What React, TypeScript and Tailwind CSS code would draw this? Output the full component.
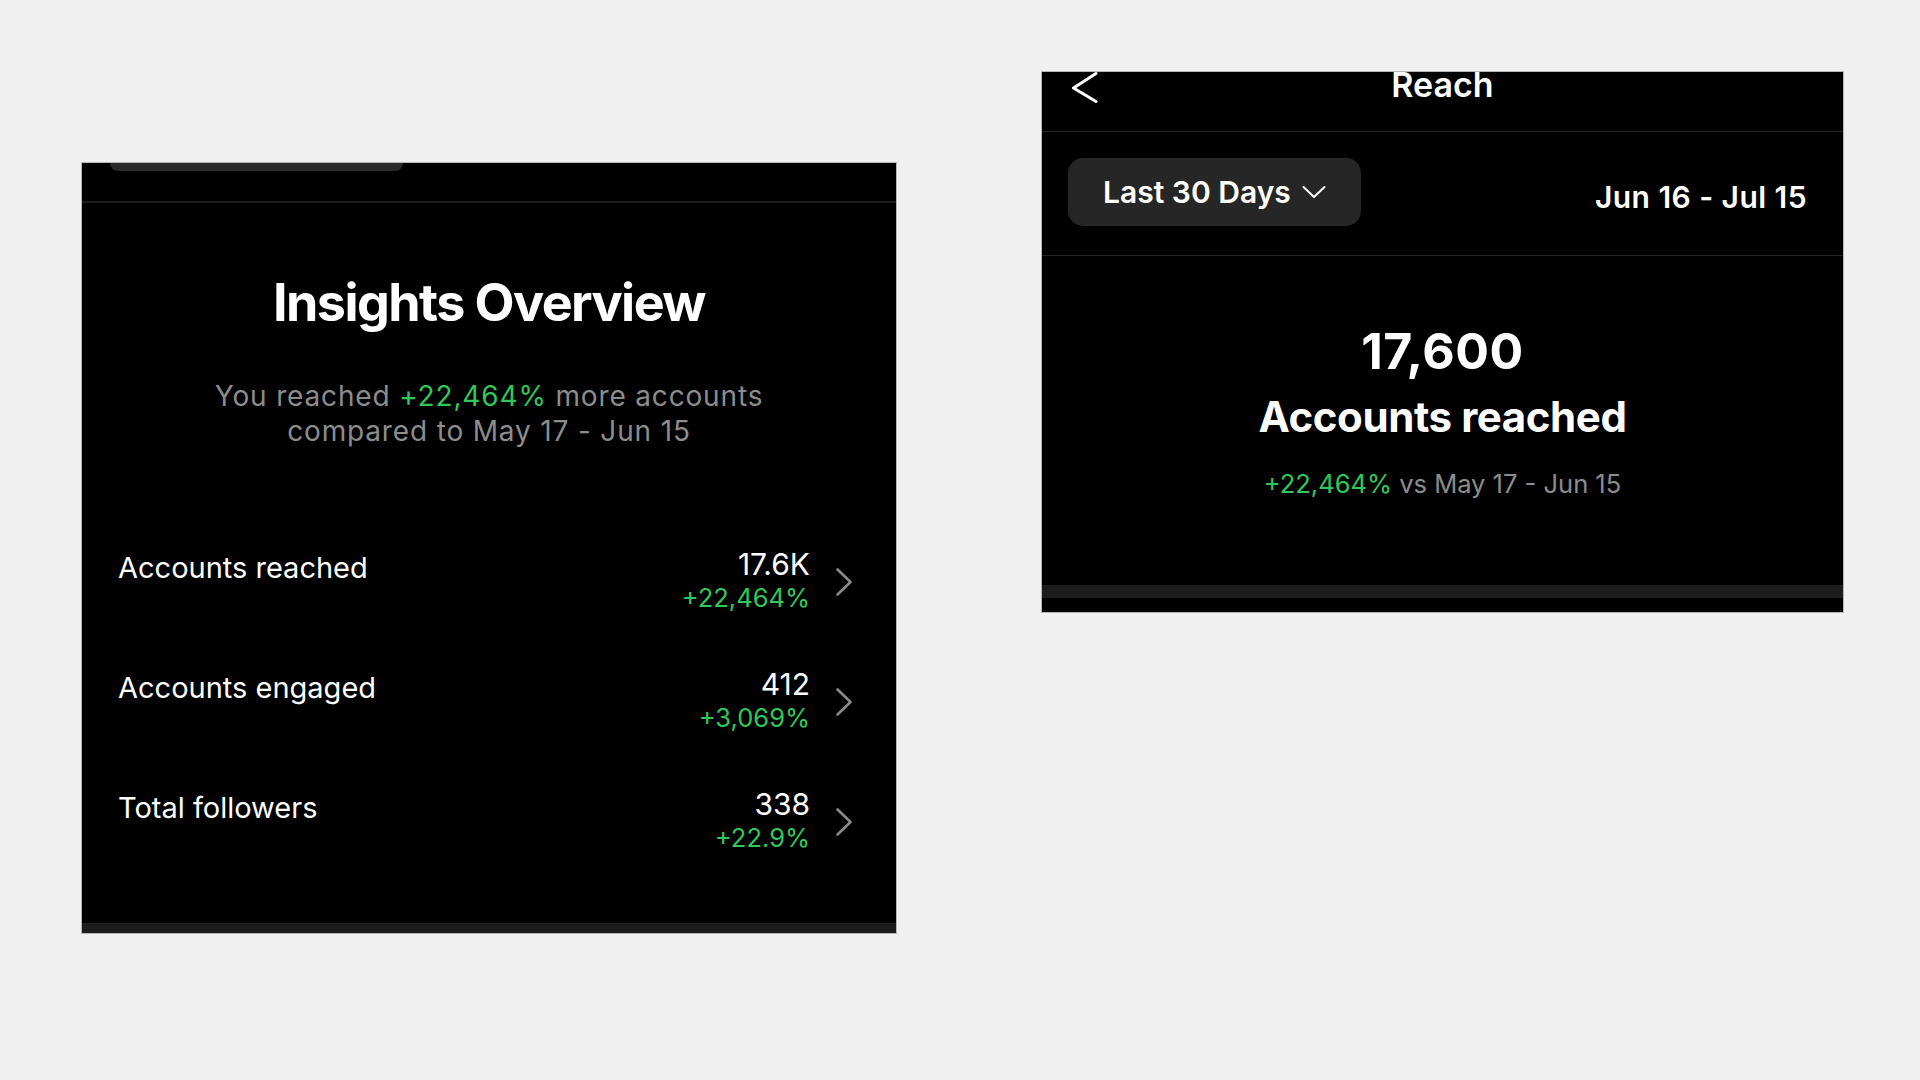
import React from "react";

const GREEN = "text-[#30c85a]";

function RowChevron() {
  return (
    <svg width="18" height="30" viewBox="0 0 18 30" fill="none">
      <path d="M2.5 2.5 L15.5 15 L2.5 27.5" stroke="#8a8a8a" strokeWidth="2.6" strokeLinecap="round" strokeLinejoin="round" />
    </svg>
  );
}

function Row({ label, value, change }: { label: string; value: string; change: string }) {
  return (
    <div className="flex h-[120px] items-start justify-between">
      <span className="mt-[3px] text-[29px] leading-[33px] text-white">{label}</span>
      <div className="flex items-center gap-[25px]">
        <div className="flex flex-col items-end">
          <span className="text-[30px] leading-[33px] text-white">{value}</span>
          <span className={`text-[25.5px] leading-[34px] ${GREEN}`}>{change}</span>
        </div>
        <RowChevron />
      </div>
    </div>
  );
}

function LeftPanel() {
  return (
    <div className="mt-[163px] flex h-[770px] w-[814px] flex-col bg-black ring-1 ring-[#b5b5b5]">
      <div className="h-[38px]">
        <div className="ml-[28px] h-[8px] w-[293px] rounded-b-[10px] bg-[#2a2a2a]" />
      </div>
      <div className="h-[2px] bg-[#1c1c1c]" />
      <h1 className="mt-[69px] text-center text-[52px] font-bold leading-[62px] tracking-[-0.03em] text-white">
        Insights Overview
      </h1>
      <p className="mt-[45px] text-center text-[28px] leading-[35px] tracking-[0.03em] text-[#8c8c8c]">
        You reached <span className={GREEN}>+22,464%</span> more accounts
        <br />
        compared to May 17 - Jun 15
      </p>
      <div className="mt-[99px] flex flex-col pl-[36px] pr-[43px]">
        <Row label="Accounts reached" value="17.6K" change="+22,464%" />
        <Row label="Accounts engaged" value="412" change="+3,069%" />
        <Row label="Total followers" value="338" change="+22.9%" />
      </div>
      <div className="mt-auto h-[10px] bg-[#1c1c1c]" />
    </div>
  );
}

function RightPanel() {
  return (
    <div className="mt-[72px] flex h-[540px] w-[801px] flex-col bg-black ring-1 ring-[#b5b5b5]">
      <div className="grid h-[59px] grid-cols-[1fr_auto_1fr] items-start">
        <div className="pl-[29px]">
          <svg width="27" height="32" viewBox="0 0 27 32" fill="none">
            <path d="M25 1.5 L2.5 16 L25 29.5" stroke="#ffffff" strokeWidth="3" strokeLinecap="round" strokeLinejoin="round" />
          </svg>
        </div>
        <span className="text-[34px] font-semibold leading-[26px] text-white">Reach</span>
        <div />
      </div>
      <div className="h-[1px] bg-[#222222]" />
      <div className="flex items-center justify-between pb-[29px] pl-[26px] pr-[36px] pt-[26px]">
        <div className="flex h-[68px] w-[293px] items-center rounded-[15px] bg-[#262626] pl-[35px]">
          <span className="text-[30px] font-semibold leading-[34px] text-white">Last 30 Days</span>
          <svg className="ml-[11px]" width="24" height="14" viewBox="0 0 24 14" fill="none">
            <path d="M1.5 2 L12 12 L22.5 2" stroke="#ffffff" strokeWidth="2" strokeLinecap="round" strokeLinejoin="round" />
          </svg>
        </div>
        <span className="pt-[9px] text-[30px] font-semibold leading-[34px] tracking-[0.015em] text-white">Jun 16 - Jul 15</span>
      </div>
      <div className="h-[1px] bg-[#222222]" />
      <div className="flex flex-col items-center pt-[67px]">
        <span className="text-[50px] font-bold leading-[56px] tracking-[0.01em] text-white">17,600</span>
        <span className="mt-[13px] text-[42px] font-bold leading-[50px] tracking-[-0.01em] text-white">Accounts reached</span>
        <span className="mt-[27px] text-[25.5px] leading-[30px] text-[#8c8c8c]">
          <span className={GREEN}>+22,464%</span> vs May 17 - Jun 15
        </span>
      </div>
      <div className="mt-auto h-[13px] bg-[#1c1c1c]" />
      <div className="h-[14px]" />
    </div>
  );
}

export default function App() {
  return (
    <div className="flex min-h-screen w-full items-start gap-[146px] bg-[#f0f0f0] pl-[82px] font-[Inter,sans-serif]">
      <LeftPanel />
      <RightPanel />
    </div>
  );
}
